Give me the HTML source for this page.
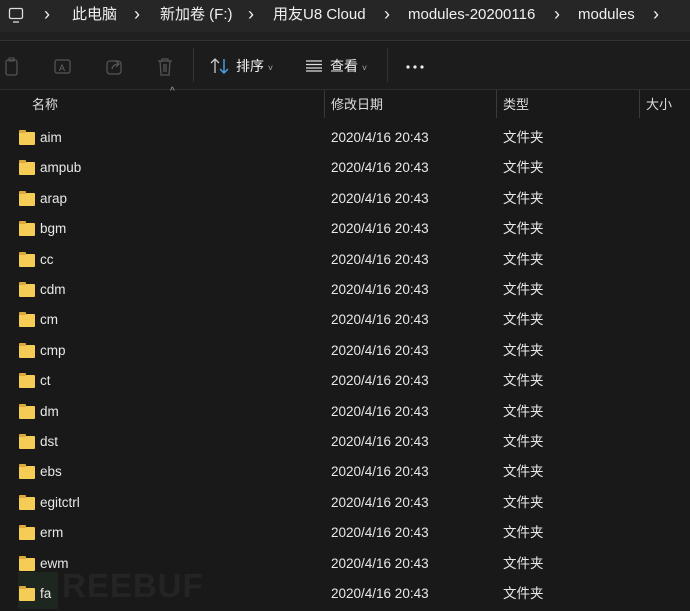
<!DOCTYPE html><html><head><meta charset="utf-8"><style>
body{margin:0;width:690px;height:609px;overflow:hidden;background:#191919;font-family:"Liberation Sans","Noto Sans CJK SC",sans-serif;color:#fff;position:relative}
span{line-height:20px}
.addr{position:absolute;left:0;top:0;width:690px;height:32px;background:#262626}
.addr span{position:absolute;top:5px;font-size:15px;color:#f0f0f0;height:20px}
.addr .c{font-size:18px;top:4px}
.sep{position:absolute;top:32px;left:0;width:690px;height:8px;background:#202020;border-bottom:1px solid #333}
.tb{position:absolute;top:41px;left:0;width:690px;height:48px;background:#1c1c1c;border-bottom:1px solid #2e2e2e}
.tb span{position:absolute;font-size:14px;color:#eee;top:15px}
.hdr span{position:absolute;top:95px;font-size:13px;color:#ddd}
.vl{position:absolute;top:90px;height:28px;width:1px;background:#3a3a3a}
.row{position:absolute;left:0;height:30px;width:690px;font-size:13.5px;color:#e8e8e8}
.row span{position:absolute;top:3px;height:20px}
.row .f{position:absolute;left:19px;top:7px;width:16px;height:13px;background:#f5cc55;border-radius:1px}
.row .f:before{content:"";position:absolute;left:0;top:-2px;width:7px;height:3px;background:#dcaa3a;border-radius:1px 1px 0 0}
.row .n{left:40px}
.row .d{left:331px}
.row .t{left:503px}
</style></head><body>
<div class="addr">
<svg style="position:absolute;left:8px;top:7px" width="16" height="18"><rect x="1.5" y="1.5" width="13" height="10" rx="1.5" fill="none" stroke="#ddd" stroke-width="1.3"/><line x1="5" y1="15" x2="11" y2="15" stroke="#ddd" stroke-width="1.3"/></svg>
<span class="c" style="left:44px">›</span><span style="left:72px">此电脑</span><span class="c" style="left:134px">›</span><span style="left:160px">新加卷 (F:)</span><span class="c" style="left:248px">›</span><span style="left:273px">用友U8 Cloud</span><span class="c" style="left:384px">›</span><span style="left:408px">modules-20200116</span><span class="c" style="left:554px">›</span><span style="left:578px">modules</span><span class="c" style="left:653px">›</span>
</div>
<div class="sep"></div>
<div class="tb">
<svg style="position:absolute;left:4px;top:16px" width="16" height="20"><rect x="2" y="3" width="11" height="15" rx="2" fill="none" stroke="#555" stroke-width="1.3"/><rect x="5" y="1" width="5" height="3" fill="none" stroke="#555"/></svg>
<svg style="position:absolute;left:53px;top:16px" width="20" height="20"><rect x="2" y="3" width="15" height="13" rx="2" fill="none" stroke="#555" stroke-width="1.3"/><text x="6" y="14" font-size="9" fill="#666">A</text></svg>
<svg style="position:absolute;left:105px;top:16px" width="20" height="20"><rect x="2" y="4" width="14" height="13" rx="3" fill="none" stroke="#555" stroke-width="1.3"/><path d="M7 12 Q8 7 14 7 M11 4 L14 7 L11 10" fill="none" stroke="#555" stroke-width="1.3"/></svg>
<svg style="position:absolute;left:156px;top:16px" width="18" height="20"><path d="M2 4H16M6 4V2H12V4M4 4L5 18H13L14 4M8 7V15M10 7V15" fill="none" stroke="#555" stroke-width="1.3"/></svg>
<div style="position:absolute;left:193px;top:7px;width:1px;height:34px;background:#333"></div>
<svg style="position:absolute;left:210px;top:16px" width="20" height="18"><path d="M5 16V2M1 6L5 2L9 6" fill="none" stroke="#ccc" stroke-width="1.3"/><path d="M14 2V16M10 12L14 16L18 12" fill="none" stroke="#4ca3e8" stroke-width="1.4"/></svg>
<span style="left:236px">排序 <small style="font-size:9px;color:#aaa">˅</small></span>
<svg style="position:absolute;left:305px;top:19px" width="18" height="12"><path d="M1 1H17M1 4.5H17M1 8H17M1 11H17" stroke="#ddd" stroke-width="1.2"/></svg>
<span style="left:330px">查看 <small style="font-size:9px;color:#aaa">˅</small></span>
<div style="position:absolute;left:387px;top:7px;width:1px;height:34px;background:#333"></div>
<svg style="position:absolute;left:405px;top:23px" width="20" height="6"><circle cx="3" cy="3" r="1.6" fill="#eee"/><circle cx="10" cy="3" r="1.6" fill="#eee"/><circle cx="17" cy="3" r="1.6" fill="#eee"/></svg>
</div>
<div class="hdr">
<span style="left:170px;top:82px;font-size:10px;color:#aaa">^</span>
<span style="left:32px">名称</span><div class="vl" style="left:324px"></div>
<span style="left:331px">修改日期</span><div class="vl" style="left:496px"></div>
<span style="left:503px">类型</span><div class="vl" style="left:639px"></div>
<span style="left:646px">大小</span>
</div>
<div style="position:absolute;left:18px;top:572px;width:40px;height:37px;background:#1e2620"></div>
<div style="position:absolute;left:62px;top:566px;font-size:33px;font-weight:bold;color:#242424;letter-spacing:1px;line-height:40px">REEBUF</div>
<div class="row" style="top:125px"><i class="f"></i><span class="n">aim</span><span class="d">2020/4/16 20:43</span><span class="t">文件夹</span></div>
<div class="row" style="top:155px"><i class="f"></i><span class="n">ampub</span><span class="d">2020/4/16 20:43</span><span class="t">文件夹</span></div>
<div class="row" style="top:186px"><i class="f"></i><span class="n">arap</span><span class="d">2020/4/16 20:43</span><span class="t">文件夹</span></div>
<div class="row" style="top:216px"><i class="f"></i><span class="n">bgm</span><span class="d">2020/4/16 20:43</span><span class="t">文件夹</span></div>
<div class="row" style="top:247px"><i class="f"></i><span class="n">cc</span><span class="d">2020/4/16 20:43</span><span class="t">文件夹</span></div>
<div class="row" style="top:277px"><i class="f"></i><span class="n">cdm</span><span class="d">2020/4/16 20:43</span><span class="t">文件夹</span></div>
<div class="row" style="top:307px"><i class="f"></i><span class="n">cm</span><span class="d">2020/4/16 20:43</span><span class="t">文件夹</span></div>
<div class="row" style="top:338px"><i class="f"></i><span class="n">cmp</span><span class="d">2020/4/16 20:43</span><span class="t">文件夹</span></div>
<div class="row" style="top:368px"><i class="f"></i><span class="n">ct</span><span class="d">2020/4/16 20:43</span><span class="t">文件夹</span></div>
<div class="row" style="top:399px"><i class="f"></i><span class="n">dm</span><span class="d">2020/4/16 20:43</span><span class="t">文件夹</span></div>
<div class="row" style="top:429px"><i class="f"></i><span class="n">dst</span><span class="d">2020/4/16 20:43</span><span class="t">文件夹</span></div>
<div class="row" style="top:459px"><i class="f"></i><span class="n">ebs</span><span class="d">2020/4/16 20:43</span><span class="t">文件夹</span></div>
<div class="row" style="top:490px"><i class="f"></i><span class="n">egitctrl</span><span class="d">2020/4/16 20:43</span><span class="t">文件夹</span></div>
<div class="row" style="top:520px"><i class="f"></i><span class="n">erm</span><span class="d">2020/4/16 20:43</span><span class="t">文件夹</span></div>
<div class="row" style="top:551px"><i class="f"></i><span class="n">ewm</span><span class="d">2020/4/16 20:43</span><span class="t">文件夹</span></div>
<div class="row" style="top:581px"><i class="f"></i><span class="n">fa</span><span class="d">2020/4/16 20:43</span><span class="t">文件夹</span></div>
</body></html>
